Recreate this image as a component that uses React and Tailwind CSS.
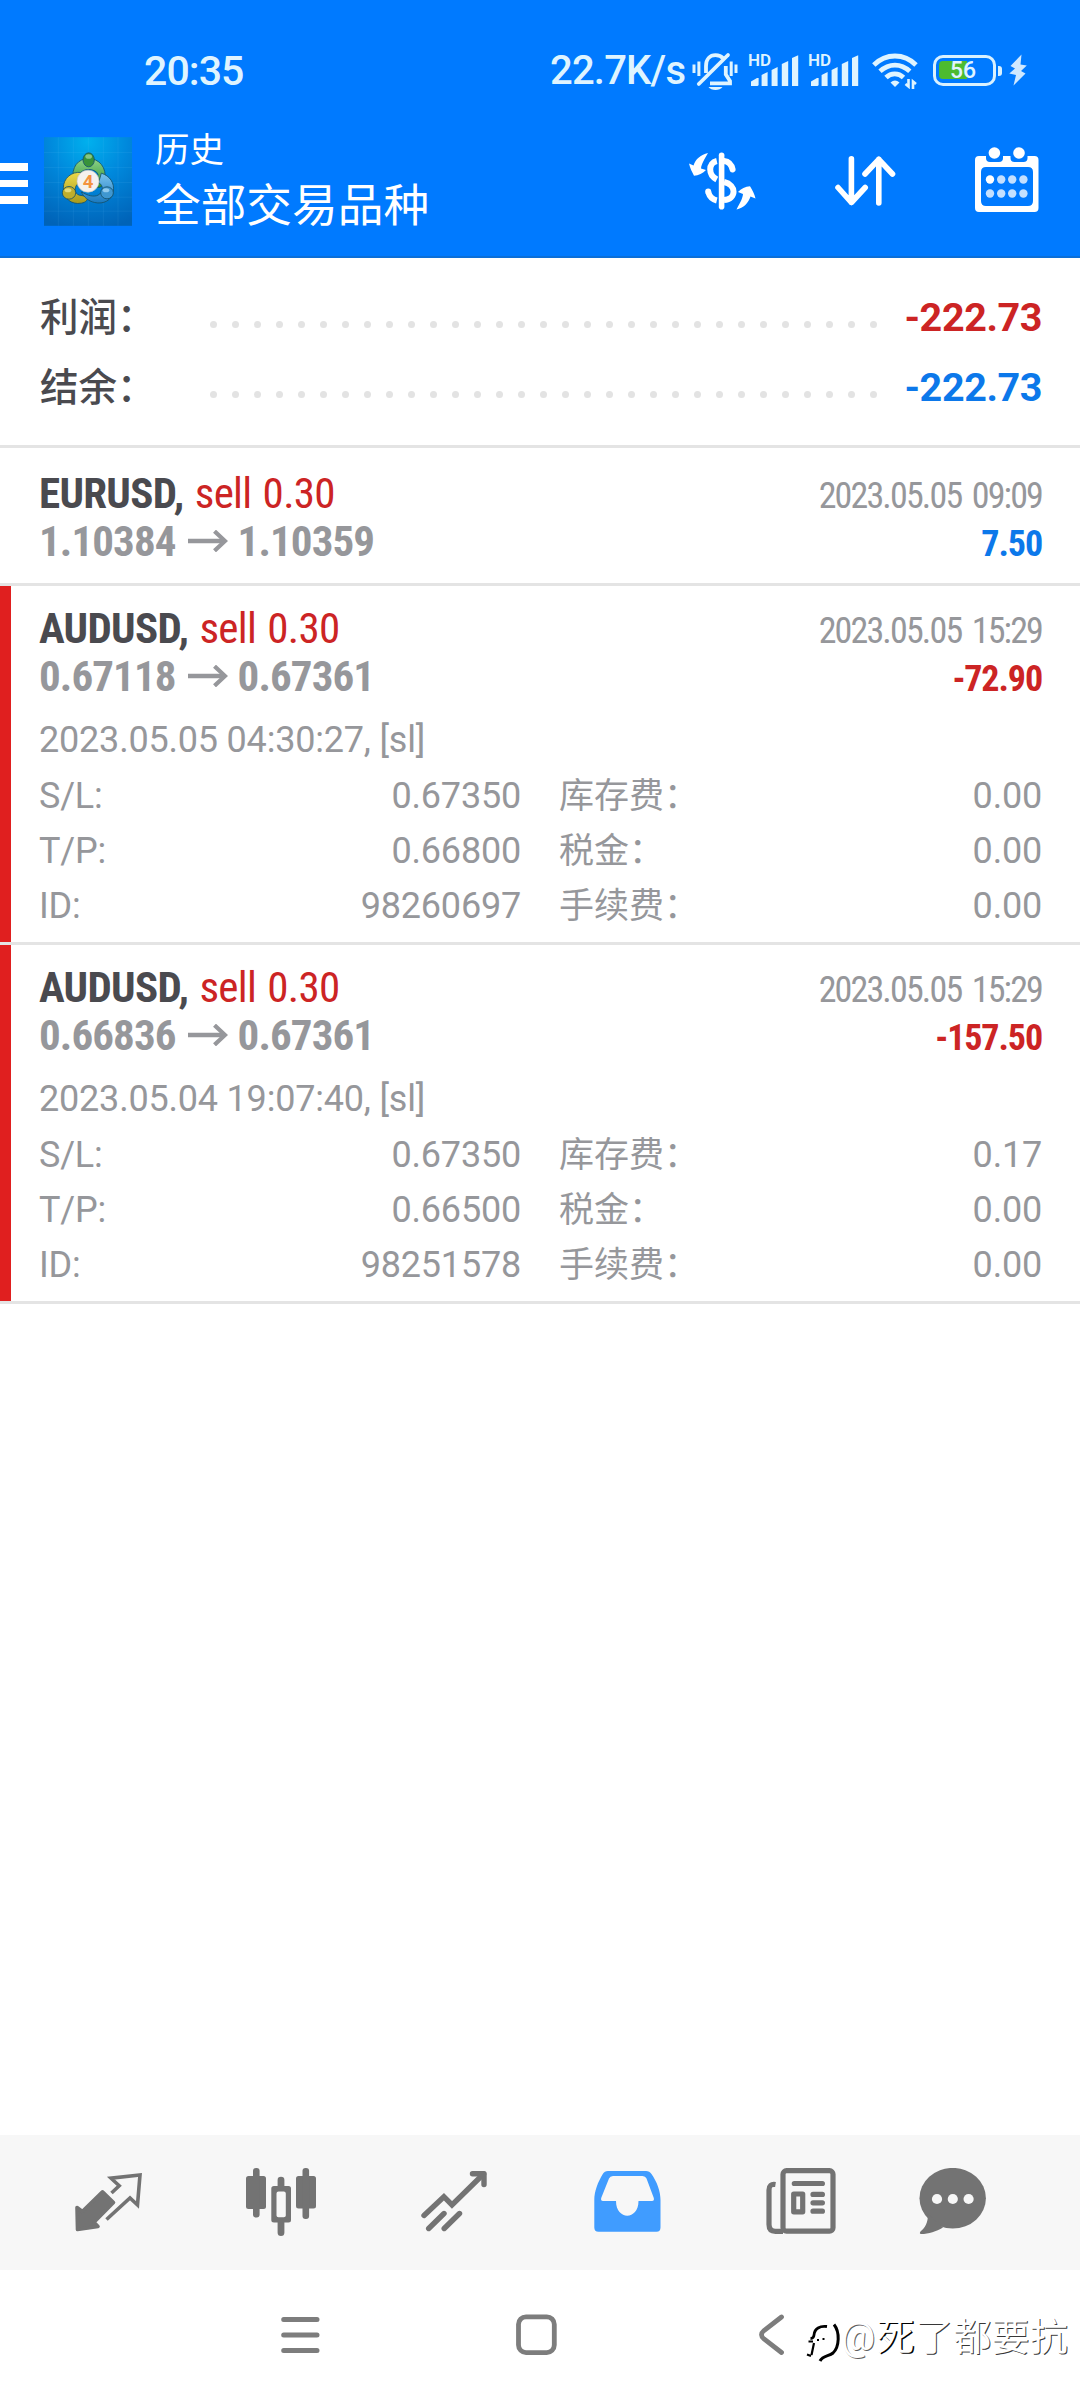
import React from 'react';

const ROBOTO = "font-['Roboto','Noto_Sans_CJK_SC',sans-serif]";

const DEALS = [
  {
    symbol: 'EURUSD', side: 'sell 0.30', open: '1.10384', close: '1.10359',
    time: '2023.05.05 09:09', profit: '7.50', details: null,
  },
  {
    symbol: 'AUDUSD', side: 'sell 0.30', open: '0.67118', close: '0.67361',
    time: '2023.05.05 15:29', profit: '-72.90',
    details: {
      opened: '2023.05.05 04:30:27, [sl]',
      rows: [
        ['S/L:', '0.67350', '库存费：', '0.00'],
        ['T/P:', '0.66800', '税金：', '0.00'],
        ['ID:', '98260697', '手续费：', '0.00'],
      ],
    },
  },
  {
    symbol: 'AUDUSD', side: 'sell 0.30', open: '0.66836', close: '0.67361',
    time: '2023.05.05 15:29', profit: '-157.50',
    details: {
      opened: '2023.05.04 19:07:40, [sl]',
      rows: [
        ['S/L:', '0.67350', '库存费：', '0.17'],
        ['T/P:', '0.66500', '税金：', '0.00'],
        ['ID:', '98251578', '手续费：', '0.00'],
      ],
    },
  },
];

function BellOff() {
  return (
    <svg className="w-[46px] h-[39px]" viewBox="0 0 46 39" fill="none" stroke="currentColor" strokeWidth="3.8">
      <path d="M14 21V14C14 7 18 3.2 23.5 3.2C27 3.2 29.5 4.4 31.5 6.6" />
      <path d="M6.8 32L36 3" strokeLinecap="round" />
      <path d="M33.8 14V22.5L38 29V31.4H18" />
      <path d="M16.5 35H30.5C28 39 19 39 16.5 35Z" fill="currentColor" stroke="none" />
      <path d="M2 12.5V21M6.9 9.5V24M39.2 9.5V24M44 12.5V21" strokeWidth="3" />
    </svg>
  );
}

function Signal() {
  return (
    <div className="relative w-[50px] h-[33px]">
      <span className="absolute -left-[1px] -top-[4px] text-[17px] leading-[20px] font-semibold">HD</span>
      <svg className="w-[50px] h-[33px]" viewBox="0 0 50 33" fill="currentColor">
        <path d="M2 32V27.5L8 24H9.6V30.5Q9.6 32 8 32Z" />
        <path d="M12.6 32V21L18.6 18V32Z" />
        <path d="M22.6 32V16L28.6 13V32Z" />
        <path d="M32.8 32V10L39.2 7V32Z" />
        <path d="M43 32V4L49.2 1.2V32Z" />
      </svg>
    </div>
  );
}

function Wifi() {
  return (
    <svg className="w-[46px] h-[36px]" viewBox="0 0 46 36" fill="none" stroke="currentColor" strokeWidth="4.8">
      <path d="M1.8 12C14 0 32 0 44 12" />
      <path d="M8 18.3C17 10 29 10 37.8 18.3" />
      <path d="M14 24.5C19 19.6 26.5 19.6 31.5 24.5" />
      <path d="M18.5 29.5Q23 25.5 27.5 29.5L23 34Z" fill="currentColor" stroke="none" />
      <path d="M36.5 26V33.5L33.5 31M41 36V28.5L44 31" strokeWidth="2.6" />
    </svg>
  );
}

function Battery() {
  return (
    <div className="flex items-center">
      <div className="relative w-[63px] h-[31px] border-[3.5px] border-[#d9f1ff] rounded-[10px]">
        <div className="absolute left-[3px] top-[3px] w-[28px] h-[18px] rounded-l-[4px] bg-[#4cbb2f]" />
        <span className="absolute left-[14px] top-[0.5px] text-[23px] leading-[24px] font-medium">56</span>
      </div>
      <div className="ml-[2px] w-[4px] h-[10px] rounded-r-[3px] bg-[#d9f1ff]" />
    </div>
  );
}

function StatusBar() {
  return (
    <div className="h-[112px] pt-[50px] flex text-[#dff4ff]">
      <span className="ml-[144px] w-[406px] text-[41px] leading-[42px] font-medium tracking-[-0.9px]">20:35</span>
      <span className="w-[142px] text-[40px] leading-[42px] font-medium tracking-[-0.8px]">22.7K/s</span>
      <div className="pt-[2px]"><BellOff /></div>
      <div className="ml-[11px] pt-[4px]"><Signal /></div>
      <div className="ml-[10px] pt-[4px]"><Signal /></div>
      <div className="ml-[13px] pt-[3px]"><Wifi /></div>
      <div className="ml-[15px] pt-[5px]"><Battery /></div>
      <svg className="ml-[7px] mt-[4px] w-[18px] h-[32px]" viewBox="0 0 18 32" fill="#cfe8ff">
        <path d="M12.5 .5L1.5 12L6 14.5L.3 19.5L7 21L4.5 31.5L16.5 19.5L12 17L17.8 11.5L11.5 10.5Z" />
      </svg>
    </div>
  );
}

function AppLogo() {
  return (
    <svg className="w-[88px] h-[89px]" viewBox="0 0 264 266">
      <defs>
        <radialGradient id="sky" cx="50%" cy="5%" r="100%">
          <stop offset="0" stopColor="#00b0ee" />
          <stop offset="0.45" stopColor="#0088dc" />
          <stop offset="1" stopColor="#0063b8" />
        </radialGradient>
        <linearGradient id="green" x1="0" y1="0" x2="0" y2="1">
          <stop offset="0" stopColor="#8fd48a" />
          <stop offset="1" stopColor="#2c8f2e" />
        </linearGradient>
        <linearGradient id="gold" x1="0" y1="0" x2="0" y2="1">
          <stop offset="0" stopColor="#ecd94a" />
          <stop offset="1" stopColor="#a89a1c" />
        </linearGradient>
        <linearGradient id="azure" x1="0" y1="0" x2="0" y2="1">
          <stop offset="0" stopColor="#7cc4ee" />
          <stop offset="1" stopColor="#1878c0" />
        </linearGradient>
      </defs>
      <rect width="264" height="266" fill="url(#sky)" />
      <path d="M43 0V266M88 0V266M133 0V266M178 0V266M222 0V266M0 46H264M0 91H264M0 136H264M0 180H264M0 222H264"
        stroke="#7fd0ff" strokeOpacity=".14" strokeWidth="2" />
      <g stroke="#14506a" strokeWidth="2.5">
        <path d="M88 132C80 88 104 64 134 64C164 64 190 90 182 130C180 146 168 154 156 150L162 112C156 92 112 92 108 112L104 126Z" fill="url(#green)" />
        <path d="M112 106C82 102 58 124 58 152C56 182 82 204 112 198C126 196 134 186 130 178L106 174C90 170 90 146 104 138Z" fill="url(#gold)" />
        <path d="M172 108C198 116 212 138 208 162C204 190 178 202 152 196C132 192 118 178 112 164C132 176 150 180 162 174C178 166 180 146 164 136Z" fill="url(#azure)" />
        <ellipse cx="134" cy="68" rx="17" ry="21" fill="#38923a" />
        <ellipse cx="75" cy="167" rx="20" ry="19" fill="#bfae2c" />
        <ellipse cx="189" cy="167" rx="19" ry="18" fill="#3f97d0" />
      </g>
      <ellipse cx="134" cy="58" rx="10" ry="7" fill="#a7dca5" opacity=".7" />
      <ellipse cx="72" cy="159" rx="10" ry="6" fill="#f6ee9a" opacity=".7" />
      <ellipse cx="186" cy="159" rx="10" ry="6" fill="#b4e0fa" opacity=".7" />
      <circle cx="132" cy="132" r="33" fill="#f4f1ee" stroke="#c9c4bd" strokeWidth="2" />
      <text x="132" y="152" textAnchor="middle" fontFamily="Roboto, sans-serif" fontWeight="700" fontSize="56" fill="#f39340">4</text>
    </svg>
  );
}

function SwapCurrency() {
  return (
    <svg className="w-[67px] h-[58px]" viewBox="0 0 67 58" fill="none" stroke="currentColor" strokeWidth="6">
      <rect x="29.8" y="0.5" width="5.6" height="57" rx="2.8" fill="currentColor" stroke="none" />
      <path d="M27.8 9C19 11 19 23 27.8 27.5" />
      <path d="M35 9C39 9.5 42.5 12.5 43.6 17.5" strokeLinecap="round" />
      <path d="M35 30C48 33 47.5 47 35 48" />
      <path d="M19.2 40C20.5 44.5 23.5 47.5 27.8 48.5" />
      <circle cx="19.2" cy="39.5" r="3" fill="currentColor" stroke="none" />
      <g fill="currentColor" stroke="none">
        <path d="M19 1C15 8 12.5 12 12 16.5L17 18C14 21.5 9.5 23.5 5 23.7C3 20 1 16 0 11.5L4.5 13.5C6.5 7 12 2.5 19 1Z" />
        <path d="M47.5 57.5C51.5 50 53.5 46.5 54 42L49 40C52 36.5 56.5 34.5 61 34.2C63.5 38 65.5 42 66.5 46.5L61.5 44.5C59.5 51 54.5 56 47.5 57.5Z" />
      </g>
    </svg>
  );
}

function SortArrows() {
  return (
    <svg className="w-[61px] h-[50px]" viewBox="0 0 61 50" fill="none" stroke="currentColor" strokeWidth="5.6" strokeLinecap="round" strokeLinejoin="round">
      <path d="M16.4 2.8V46.5M3 31.5L16.4 46.5L30.2 31.5" />
      <path d="M43.8 47V3.3M30 18L43.8 3.3L57.5 18" />
    </svg>
  );
}

function Calendar() {
  return (
    <svg className="w-[64px] h-[65px]" viewBox="0 0 64 65" fill="currentColor">
      <path fillRule="evenodd" d="M4 9H11V11Q11 15 15 15H24Q28 15 28 11V9H35.5V11Q35.5 15 39.5 15H48.5Q52.5 15 52.5 11V9H59.5Q63.5 9 63.5 13V61Q63.5 65 59.5 65H4Q0 65 0 61V13Q0 9 4 9ZM11 20Q6 20 6 25V54Q6 59 11 59H53Q58 59 58 54V25Q58 20 53 20Z" />
      <circle cx="19.4" cy="6" r="5.8" />
      <circle cx="44" cy="6" r="5.8" />
      {[32.5, 46.5].map(cy => [15, 26.2, 37.2, 48.4].map(cx => (
        <circle key={`${cx}-${cy}`} cx={cx} cy={cy} r="4.2" fill={cx === 15 && cy === 32.5 ? '#fff' : '#c4e0ff'} />
      )))}
    </svg>
  );
}

function Header() {
  return (
    <header className="h-[258px] bg-[#007aff] border-b-2 border-[#0b6fd8] text-white">
      <StatusBar />
      <div className="flex">
        <div className="w-[28px] pt-[51px] flex flex-col gap-[9px]">
          <div className="h-[7.5px] bg-white" />
          <div className="h-[7.5px] bg-white" />
          <div className="h-[7.5px] bg-white" />
        </div>
        <div className="ml-[16px] pt-[25px]"><AppLogo /></div>
        <div className="ml-[23px] w-[534px] pt-[17px]">
          <div className="text-[34.5px] leading-[42px]">历史</div>
          <div className="mt-[9px] text-[45.7px] leading-[54px]">全部交易品种</div>
        </div>
        <div className="pt-[40px]"><SwapCurrency /></div>
        <div className="ml-[79px] pt-[44px]"><SortArrows /></div>
        <div className="ml-[79px] pt-[35px]"><Calendar /></div>
      </div>
    </header>
  );
}

function SummaryRow({ label, value, color }) {
  return (
    <div className="h-[70px] flex items-baseline">
      <span className="w-[170px] text-[38.5px] leading-[72px] font-medium text-[#4a4a4f]">{label}</span>
      <div className="flex gap-[15px] self-start pt-[39px]">
        {Array.from({ length: 31 }, (_, i) => (
          <span key={i} className="w-[7px] h-[7px] rounded-full bg-[#e3e3e3]" />
        ))}
      </div>
      <span className={`ml-auto text-[39.5px] leading-[72px] font-bold tracking-[-0.4px] ${color}`}>{value}</span>
    </div>
  );
}

function PriceArrow() {
  return (
    <svg className="w-[40px] h-[22px] ml-[12px] mr-[10px]" viewBox="0 0 40 22" fill="none" stroke="#96979b" strokeWidth="4.6">
      <path d="M0 11H37" />
      <path d="M26.5 1.2L37 11L26.5 20.8" strokeWidth="4.2" />
    </svg>
  );
}

function Deal({ deal }) {
  const loss = deal.profit.startsWith('-');
  return (
    <div className="border-b-[3px] border-[#e4e4e4]">
      <div className={`pr-[38px] ${deal.details ? 'h-[356px] border-l-[11px] border-[#e01f1f] pl-[28px] pt-[18px]' : 'h-[135px] pl-[39px] pt-[21px]'}`}>
        <div className="h-[48px] flex items-baseline justify-between [font-stretch:75%] leading-[48px]">
          <div className="text-[43px] tracking-[-0.7px]">
            <span className="font-bold text-[#4a4a4f]">{deal.symbol},</span>
            <span className="text-[#cc2424] [word-spacing:2px]"> {deal.side}</span>
          </div>
          <div className="text-[36px] tracking-[-1.85px] [word-spacing:4px] text-[#96979b]">{deal.time}</div>
        </div>
        <div className="h-[48px] flex items-baseline justify-between [font-stretch:75%] leading-[48px]">
          <div className="flex items-center text-[43px] tracking-[-0.9px] font-bold text-[#96979b]">
            {deal.open}<PriceArrow />{deal.close}
          </div>
          <div className={`text-[36px] tracking-[-1.1px] font-bold ${loss ? 'text-[#cc2424]' : 'text-[#0c78ea]'}`}>{deal.profit}</div>
        </div>
        {deal.details && (
          <div className="mt-[11.5px] text-[36px] tracking-[-0.2px] text-[#96979b]">
            <div className="leading-[57px]">{deal.details.opened}</div>
            {deal.details.rows.map(([k1, v1, k2, v2]) => (
              <div key={k1} className="flex leading-[55.4px]">
                <span>{k1}</span>
                <span className="ml-auto">{v1}</span>
                <div className="ml-[38px] w-[483px] flex justify-between">
                  <span className="text-[35px] tracking-normal">{k2}</span>
                  <span>{v2}</span>
                </div>
              </div>
            ))}
          </div>
        )}
      </div>
    </div>
  );
}

function TabBar() {
  return (
    <nav className="h-[135px] bg-[#f7f7f7] pl-[75px] pt-[33px] flex items-start text-[#737373]">
      {/* Quotes */}
      <svg className="mt-[5px] w-[68px] h-[60px]" viewBox="0 0 68 60" fill="none" stroke="currentColor" strokeWidth="3.6">
        <path d="M2 34.5L7.3 38.5L27.5 18.8L38.5 29.5L19 49.3L23 53.5L2.5 56.5Z" fill="currentColor" strokeLinejoin="round" />
        <path d="M36.5 20L44.2 12.8L36 5.2L65 2L62.5 32L55 25L31.5 46.5" />
      </svg>
      {/* Charts */}
      <svg className="ml-[103px] w-[70px] h-[68px]" viewBox="0 0 70 68" fill="currentColor">
        <rect x="0" y="8" width="20" height="33" rx="2.5" />
        <rect x="7" y="0" width="6.6" height="49.5" rx="3" />
        <path fillRule="evenodd" d="M28 18H42.5Q45 18 45 20.5V52Q45 54.5 42.5 54.5H28Q25.3 54.5 25.3 52V20.5Q25.3 18 28 18ZM32.5 23.5Q30.5 23.5 30.5 25.5V47.5Q30.5 49.3 32.5 49.3H37.8Q39.8 49.3 39.8 47.5V25.5Q39.8 23.5 37.8 23.5Z" />
        <path d="M31.6 18V12Q31.6 8.7 35 8.7Q38.4 8.7 38.4 12V18ZM31.6 54V64.5Q31.6 68 35 68Q38.4 68 38.4 64.5V54Z" />
        <rect x="50" y="8" width="20" height="32.5" rx="2.5" />
        <rect x="56.5" y="0" width="6.6" height="51" rx="3" />
      </svg>
      {/* Trade */}
      <svg className="ml-[105px] mt-[3px] w-[67px] h-[61px]" viewBox="0 0 67 61" fill="none" stroke="currentColor" strokeWidth="5.4" strokeLinecap="round">
        <path d="M3 44.5L22.9 25.7L31 34L62.5 3" />
        <path d="M51.5 2.8H63V13.5" strokeLinejoin="round" />
        <path d="M7.7 57.5L23 42.5M23.2 57.5L38.5 42.5" />
      </svg>
      {/* History */}
      <svg className="ml-[106px] mt-[3px] w-[67px] h-[61px]" viewBox="0 0 67 61" fill="#409cff">
        <path fillRule="evenodd" d="M14 0H52Q55.5 0 57.5 3C63 11 66.5 20 66.5 29V56.5Q66.5 60.7 62.5 60.7H4.5Q.3 60.7 .3 56.5V29C.3 20 4 11 8.8 3Q10.5 0 14 0ZM19 5Q16 5 15 7.5L7.2 27Q6.5 30 9 30H22C22 49.5 44.5 49.5 44.5 30H58Q60.5 30 59.8 27L52.5 7.5Q51.5 5 48.5 5Z" />
      </svg>
      {/* News */}
      <svg className="ml-[105px] w-[70px] h-[67px]" viewBox="0 0 70 67" fill="none" stroke="currentColor" strokeWidth="5.2" strokeLinecap="round">
        <rect x="17" y="2.7" width="50" height="60.5" rx="3.5" />
        <path d="M9.5 16.5Q3 15.5 3 22V56.5Q3 63.3 9.5 63.3H17" strokeLinecap="butt" />
        <path d="M28.3 15.5H56.4M47 26.4H56.4M47 34.8H56.4M47 43.2H56.4" />
        <rect x="27.7" y="26" width="9" height="17.8" strokeLinejoin="round" />
      </svg>
      {/* Chat */}
      <svg className="ml-[83px] w-[68px] h-[67px]" viewBox="0 0 68 67" fill="currentColor">
        <ellipse cx="33.7" cy="30.2" rx="33.2" ry="30.3" />
        <path d="M9 46C9 55 6 60 1.5 63.5Q0 65.5 2 66C10 66 17 63.5 24 59.5Z" />
        <circle cx="18" cy="31" r="5.1" fill="#f7f7f7" />
        <circle cx="33.8" cy="31" r="5.1" fill="#f7f7f7" />
        <circle cx="49.6" cy="31" r="5.1" fill="#f7f7f7" />
      </svg>
    </nav>
  );
}

function SystemNav() {
  return (
    <div className="h-[130px] bg-white pl-[281px] pt-[44px] flex items-start text-[#7d7d7d]">
      <svg className="mt-[2px] w-[39px] h-[38px]" viewBox="0 0 39 38" stroke="currentColor" strokeWidth="5" strokeLinecap="round">
        <path d="M2.7 3.5H36M2.7 19H36M2.7 34.5H36" />
      </svg>
      <svg className="ml-[196px] w-[41px] h-[41px]" viewBox="0 0 41 41" fill="none" stroke="currentColor" strokeWidth="4.8">
        <rect x="2.5" y="2.8" width="35.8" height="35.8" rx="7.5" />
      </svg>
      <svg className="ml-[202px] w-[27px] h-[42px]" viewBox="0 0 27 42" fill="none" stroke="currentColor" strokeWidth="4.8" strokeLinecap="round">
        <path d="M22.5 3L5 16.5Q0 20.7 5 25L22.5 38.5" />
      </svg>
      <svg className="ml-[19px] mt-[9px] w-[36px] h-[42px]" viewBox="0 0 36 42" fill="none" stroke="#000">
        <path d="M22 3.5C15 2.5 9.5 5.5 9 12Q8.7 15.5 5.5 15.5" strokeWidth="2.8" />
        <path d="M3.5 18.5H8M9 20L6.5 32M2 31.5L6 33M12 17H14" strokeWidth="2.2" />
        <path d="M17.5 16H19.5" strokeWidth="2" />
        <path d="M29 1.5C35 9 34.5 24 28 30C24 33.5 18 32 15 38" strokeWidth="3" />
      </svg>
      <div className="ml-0 mt-px flex whitespace-nowrap text-[38px] leading-[44px] text-white">
        <span className="[text-shadow:1px_1px_0_rgba(0,0,0,0.65)]">@</span>
        <span className="ml-px [text-shadow:1.5px_1px_0_#000]">死</span>
        <span className="ml-px tracking-[0.2px] [text-shadow:1px_1px_0_rgba(0,0,0,0.8)]">了都要抗</span>
      </div>
    </div>
  );
}

export default function App() {
  return (
    <div className={`w-[1080px] h-[2400px] bg-white flex flex-col overflow-hidden ${ROBOTO}`}>
      <Header />
      <section className="h-[190px] pl-[40px] pr-[38px] pt-[24px] border-b-[3px] border-[#e4e4e4]">
        <SummaryRow label="利润：" value="-222.73" color="text-[#cc2424]" />
        <SummaryRow label="结余：" value="-222.73" color="text-[#0c78ea]" />
      </section>
      <main className="flex-1">
        {DEALS.map((deal, i) => <Deal key={i} deal={deal} />)}
      </main>
      <TabBar />
      <SystemNav />
    </div>
  );
}
